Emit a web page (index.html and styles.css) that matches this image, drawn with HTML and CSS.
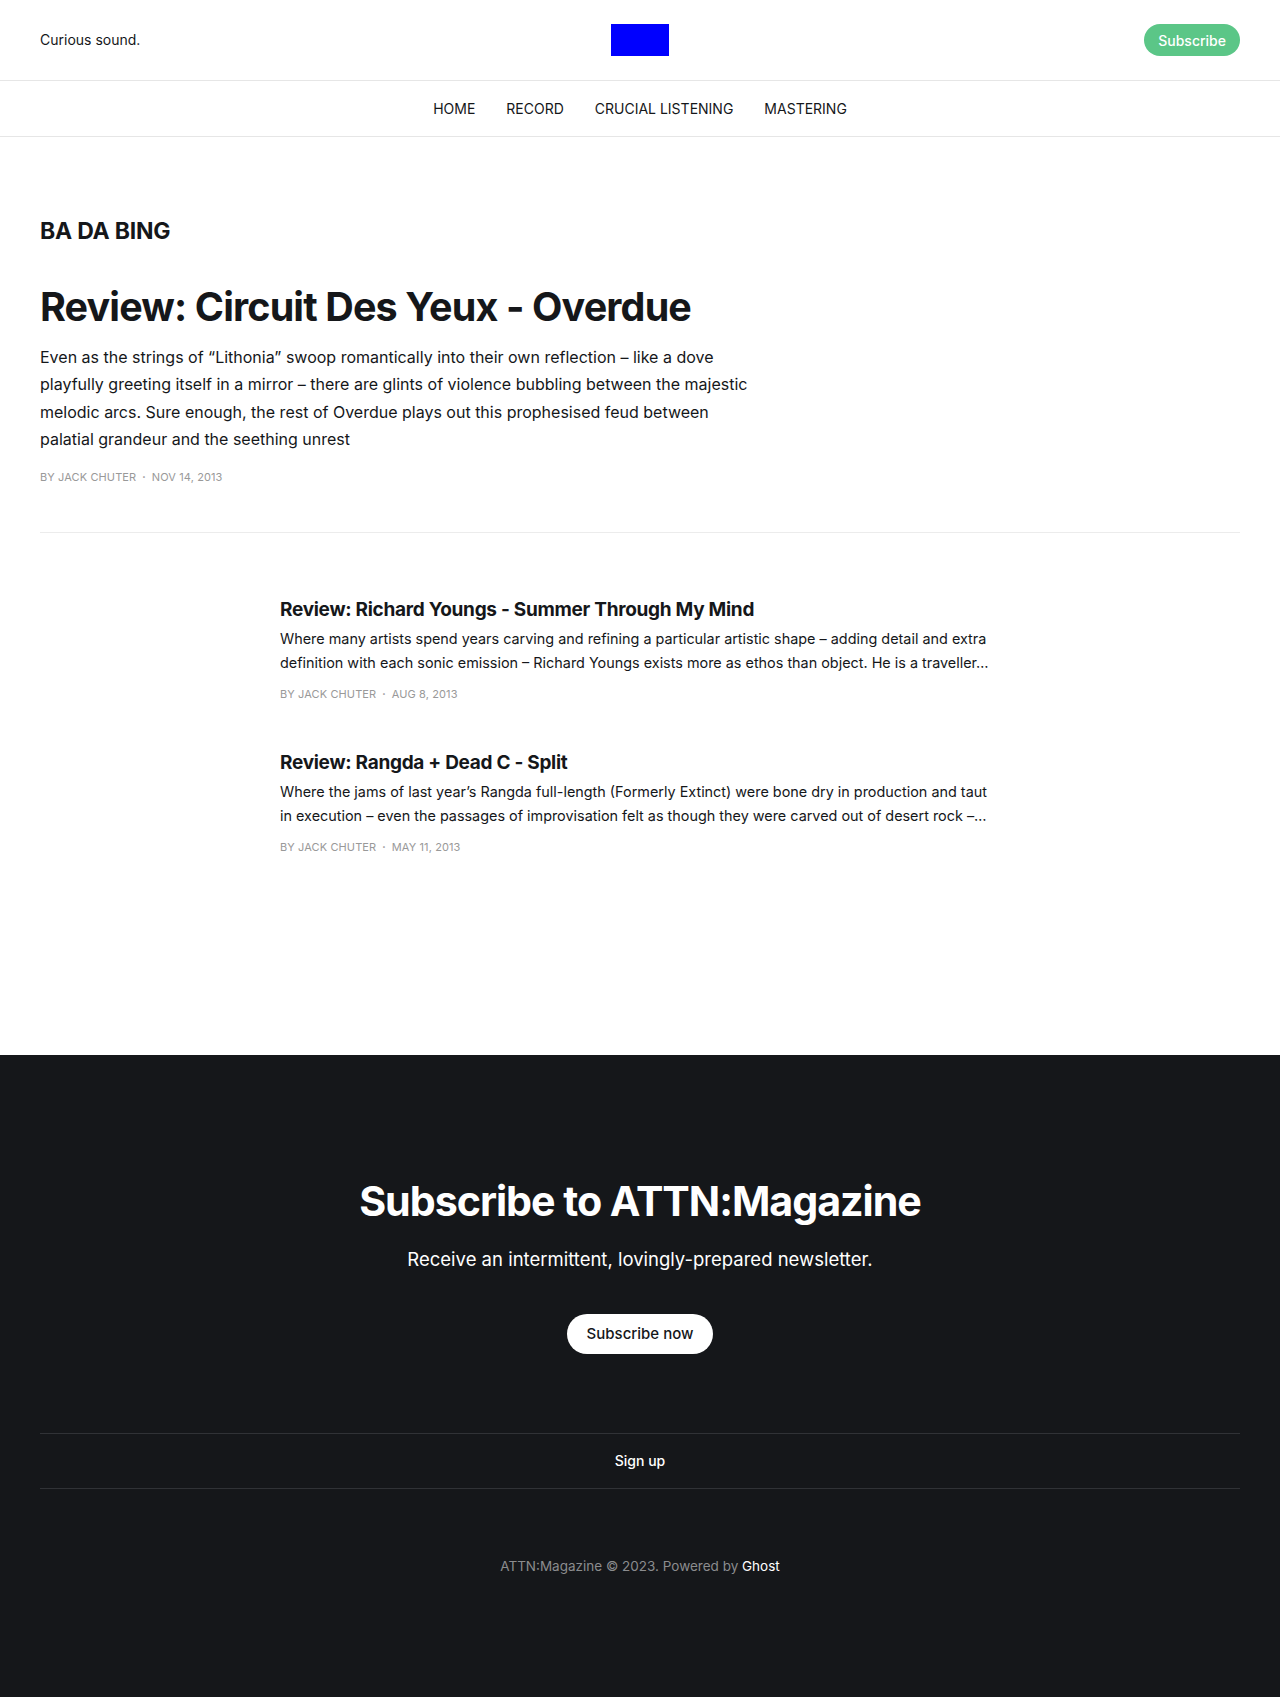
FILE: index.html
```html
<!DOCTYPE html>
<html lang="en">
<head>
<meta charset="utf-8">
<title>ATTN:Magazine</title>
<link rel="stylesheet" href="styles.css">
</head>
<body>
<header class="site-header">
  <div class="container header-top">
    <div class="header-desc">Curious sound.</div>
    <a class="header-logo" href="#" aria-label="ATTN:Magazine"></a>
    <div class="header-actions"><a class="btn-subscribe" href="#">Subscribe</a></div>
  </div>
  <nav class="header-nav">
    <ul class="nav-list">
      <li><a href="#">HOME</a></li>
      <li><a href="#">RECORD</a></li>
      <li><a href="#">CRUCIAL LISTENING</a></li>
      <li><a href="#">MASTERING</a></li>
    </ul>
  </nav>
</header>

<main class="site-main">
  <div class="container">
    <section class="hero">
      <h1 class="tag-name">BA DA BING</h1>
      <article class="hero-post">
        <h2 class="hero-title">Review: Circuit Des Yeux - Overdue</h2>
        <p class="hero-excerpt">Even as the strings of “Lithonia” swoop romantically into their own reflection – like a dove playfully greeting itself in a mirror – there are glints of violence bubbling between the majestic melodic arcs. Sure enough, the rest of Overdue plays out this prophesised feud between palatial grandeur and the seething unrest</p>
        <div class="meta"><span>By Jack Chuter</span><span class="dot">•</span><span>Nov 14, 2013</span></div>
      </article>
    </section>

    <section class="feed">
      <article class="feed-item">
        <h3 class="feed-title">Review: Richard Youngs - Summer Through My Mind</h3>
        <p class="feed-excerpt">Where many artists spend years carving and refining a particular artistic shape – adding detail and extra definition with each sonic emission – Richard Youngs exists more as ethos than object. He is a traveller…</p>
        <div class="meta"><span>By Jack Chuter</span><span class="dot">•</span><span>Aug 8, 2013</span></div>
      </article>
      <article class="feed-item">
        <h3 class="feed-title">Review: Rangda + Dead C - Split</h3>
        <p class="feed-excerpt">Where the jams of last year’s Rangda full-length (Formerly Extinct) were bone dry in production and taut in execution – even the passages of improvisation felt as though they were carved out of desert rock –…</p>
        <div class="meta"><span>By Jack Chuter</span><span class="dot">•</span><span>May 11, 2013</span></div>
      </article>
    </section>
  </div>
</main>

<footer class="site-footer">
  <div class="container">
    <section class="footer-cta">
      <h2 class="cta-title">Subscribe to ATTN:Magazine</h2>
      <p class="cta-desc">Receive an intermittent, lovingly-prepared newsletter.</p>
      <a class="cta-btn" href="#">Subscribe now</a>
    </section>
    <nav class="footer-nav">
      <a href="#">Sign up</a>
    </nav>
    <div class="copyright">ATTN:Magazine © 2023. Powered by <a href="#">Ghost</a></div>
  </div>
</footer>
</body>
</html>
```
FILE: styles.css
```css
* { box-sizing: border-box; }

html, body {
  margin: 0;
  padding: 0;
}

body {
  font-family: Inter, "Noto Sans", "Liberation Sans", sans-serif;
  color: #15171a;
  background: #fff;
  -webkit-font-smoothing: antialiased;
}

a { color: inherit; text-decoration: none; }

.container {
  max-width: 1280px;
  margin: 0 auto;
  padding: 0 40px;
}

/* Header */
.site-header {
  border-bottom: 1px solid #e6e6e6;
}

.header-top {
  display: grid;
  grid-template-columns: 1fr auto 1fr;
  align-items: center;
  height: 81px;
  border-bottom: 1px solid #e6e6e6;
  max-width: none;
}

.header-desc {
  font-size: 14px;
  line-height: 1.3;
  color: #15171a;
}

.header-logo {
  display: block;
  width: 58px;
  height: 32px;
  background: #0000ff;
}

.header-actions {
  display: flex;
  justify-content: flex-end;
}

.btn-subscribe {
  display: inline-flex;
  align-items: center;
  height: 32px;
  padding: 0 14px;
  border-radius: 16px;
  background: #5bc687;
  color: #fff;
  font-size: 14px;
  font-weight: 500;
}

.header-nav {
  height: 55px;
  display: flex;
  align-items: center;
  justify-content: center;
}

.nav-list {
  list-style: none;
  margin: 0;
  padding: 0;
  display: flex;
  gap: 31px;
  font-size: 14px;
  line-height: 1;
}

/* Main */
.site-main {
  padding-top: 81px;
  padding-bottom: 200px;
}

.tag-name {
  margin: 0;
  font-size: 23px;
  line-height: 26px;
  font-weight: 700;
  letter-spacing: -0.01em;
}

.hero-post {
  margin-top: 42px;
  padding-bottom: 47px;
  border-bottom: 1px solid #ececec;
}

.hero-title {
  margin: 0;
  font-size: 39.5px;
  line-height: 43px;
  font-weight: 700;
  letter-spacing: -0.022em;
}

.hero-excerpt {
  margin: 15px 0 0;
  max-width: 720px;
  font-size: 16px;
  line-height: 27.4px;
  color: #15171a;
}

.meta {
  display: flex;
  align-items: center;
  gap: 6px;
  margin-top: 16px;
  font-size: 11px;
  line-height: 15px;
  text-transform: uppercase;
  color: #999;
  letter-spacing: 0.01em;
}

.meta .dot {
  font-size: 6px;
  position: relative;
  top: -1px;
}

.feed {
  padding-left: 240px;
  padding-top: 64px;
  display: flex;
  flex-direction: column;
  gap: 48px;
}

.feed-item {
  max-width: 720px;
}

.feed-title {
  margin: 0;
  font-size: 19px;
  line-height: 26px;
  font-weight: 700;
  letter-spacing: -0.015em;
}

.feed-excerpt {
  margin: 4px 0 0;
  font-size: 14.4px;
  line-height: 24px;
}

.feed-item .meta {
  margin-top: 12px;
}

/* Footer */
.site-footer {
  background: #15171a;
  color: #fff;
  padding-top: 120px;
  padding-bottom: 120px;
}

.footer-cta {
  text-align: center;
  padding-bottom: 79px;
}

.cta-title {
  margin: 0;
  font-size: 41.2px;
  line-height: 53px;
  font-weight: 700;
  letter-spacing: -0.025em;
}

.cta-desc {
  margin: 17px 0 0;
  font-size: 18.5px;
  line-height: 28px;
}

.cta-btn {
  display: inline-flex;
  align-items: center;
  height: 40px;
  margin-top: 41px;
  padding: 0 20px;
  border-radius: 20px;
  background: #fff;
  color: #15171a;
  font-size: 15px;
  font-weight: 500;
}

.footer-nav {
  display: flex;
  justify-content: center;
  align-items: center;
  height: 56px;
  border-top: 1px solid #303236;
  border-bottom: 1px solid #303236;
  font-size: 14px;
  font-weight: 500;
}

.copyright {
  margin-top: 67px;
  text-align: center;
  font-size: 13.5px;
  line-height: 21px;
  color: #8b8c8e;
}

.copyright a {
  color: #fff;
}
```
